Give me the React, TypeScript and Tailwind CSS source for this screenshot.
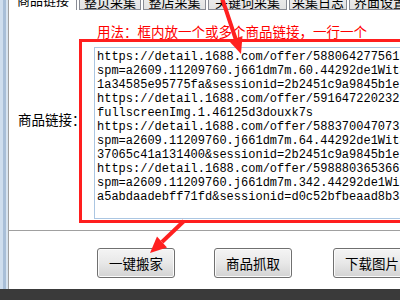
const lines = [
  'https://detail.1688.com/offer/588064277561.html?',
  'spm=a2609.11209760.j661dm7m.60.44292de1WitS5P&sk=consign&',
  '1a34585e95775fa&sessionid=2b2451c9a9845b1e7b8d1f2c3a4e5d6f',
  'https://detail.1688.com/offer/591647220232.html?',
  'fullscreenImg.1.46125d3douxk7s',
  'https://detail.1688.com/offer/588370047073.html?',
  'spm=a2609.11209760.j661dm7m.64.44292de1WitS5P&sk=consign&',
  '37065c41a131400&sessionid=2b2451c9a9845b1e7b8d1f2c3a4e5d6f',
  'https://detail.1688.com/offer/598880365366.html?',
  'spm=a2609.11209760.j661dm7m.342.44292de1WitS5P&sk=consign',
  'a5abdaadebff71fd&sessionid=d0c52bfbeaad8b3a1c2e4f5d6b7a8c9',
];

const tabs = [
  { label: '整页采集', w: 'w-[62px]' },
  { label: '整店采集', w: 'w-[63px]' },
  { label: '关键词采集', w: 'w-[79px]' },
  { label: '采集日志', w: 'w-[58px]' },
  { label: '界面设置', w: 'w-[62px]' },
];

function WinButton({ label, className = '' }: { label: string; className?: string }) {
  return (
    <button
      className={`w-[78px] h-[30px] shrink-0 rounded-[3px] border border-[#707070] bg-linear-to-b from-[#f4f4f4] via-[#e8e8e8] to-[#d3d3d3] text-[13.5px] text-black shadow-[inset_0_0_0_1px_#fbfbfb] ${className}`}
    >
      {label}
    </button>
  );
}

export default function App() {
  return (
    <div className="relative w-[400px] h-[300px] overflow-hidden bg-white flex flex-col font-['Noto_Sans_CJK_SC',sans-serif]">
      <div className="flex h-[289px]">
        {/* window frame */}
        <div className="flex w-[8px] shrink-0">
          <div className="w-[3px] bg-[#cfdeee]" />
          <div className="w-[3px] bg-[#a9bfd8]" />
          <div className="w-[2px] bg-[#d8e4f0]" />
        </div>

        <div className="flex-1 flex flex-col border-l border-[#a0a0a0] min-w-0">
          {/* tabs */}
          <div className="flex items-end h-[10px] shrink-0">
            <div className="w-[68px] h-[24px] shrink-0 flex items-end pl-[8px] pb-[3px] border-r border-[#898c95] bg-white">
              <span className="text-[13px] leading-[14px] text-black">商品链接</span>
            </div>
            {tabs.map((t) => (
              <div
                key={t.label}
                className={`${t.w} h-[22px] shrink-0 ml-[2px] flex items-end justify-center border border-[#898c95] bg-linear-to-b from-[#f2f2f2] to-[#e3e3e3]`}
              >
                <span className="text-[13px] leading-[14px] text-black whitespace-nowrap">{t.label}</span>
              </div>
            ))}
            <div className="flex-1 border-b border-[#898c95]" />
          </div>

          {/* panel */}
          <div className="h-[221px] shrink-0 flex flex-col border-b border-[#a0a0a0] pt-[13px]">
            <div className="ml-[88px] text-[13.5px] leading-[16px] text-[#ff0000] whitespace-nowrap">
              用法：框内放一个或多个商品链接，一行一个
            </div>
            <div className="flex">
              <div className="w-[70px] shrink-0 pl-[9px] pt-[72px] text-[13.5px] leading-[16px] text-black whitespace-nowrap">
                商品链接：
              </div>
              <div className="w-[340px] h-[184px] shrink-0 border-[3px] border-[#ff1e1e] pl-[12px] pt-[5px]">
                <div className="h-[172px] border border-[#abc6e2] pl-[2px] pt-[2px] overflow-hidden font-['Liberation_Mono',monospace] text-[12px] leading-[14px] text-black whitespace-pre">
                  {lines.map((l, i) => (
                    <div key={i}>{l}</div>
                  ))}
                </div>
              </div>
            </div>
          </div>

          {/* buttons */}
          <div className="flex pt-[17px] pl-[88px]">
            <WinButton label="一键搬家" />
            <WinButton label="商品抓取" className="ml-[39px]" />
            <WinButton label="下载图片" className="ml-[41px]" />
          </div>
        </div>
      </div>

      <div className="flex-1 bg-[#3a3a3a]" />

      {/* annotation arrows */}
      <svg className="absolute inset-0 pointer-events-none" width="400" height="300" viewBox="0 0 400 300">
        <line x1="222" y1="-2" x2="236" y2="40" stroke="#ff2020" strokeWidth="4" />
        <polygon points="241,54 242.5,36 229,41" fill="#ff2020" />
        <line x1="184" y1="221" x2="162" y2="242" stroke="#ff2020" strokeWidth="4" />
        <polygon points="150,253 167,247.5 157,236.5" fill="#ff2020" />
      </svg>
    </div>
  );
}
